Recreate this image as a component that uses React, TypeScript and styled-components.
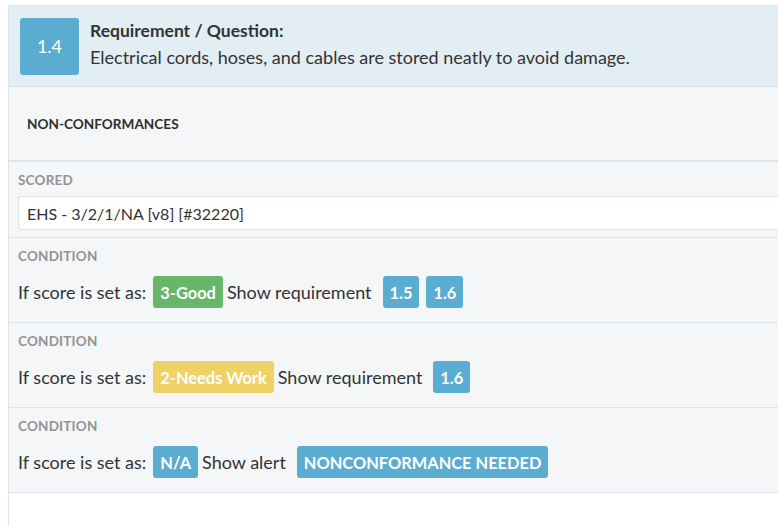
import styled, { createGlobalStyle } from "styled-components";

type Tone = "blue" | "green" | "yellow";

const TONES: Record<Tone, string> = {
  blue: "#5aadd1",
  green: "#67b66a",
  yellow: "#f0d166",
};

type Condition = {
  score: string;
  tone: Tone;
  action: string;
  targets: string[];
};

const CONDITIONS: Condition[] = [
  { score: "3-Good", tone: "green", action: "Show requirement", targets: ["1.5", "1.6"] },
  { score: "2-Needs Work", tone: "yellow", action: "Show requirement", targets: ["1.6"] },
  { score: "N/A", tone: "blue", action: "Show alert", targets: ["NONCONFORMANCE NEEDED"] },
];

const GlobalStyle = createGlobalStyle`
  html, body {
    margin: 0;
    background: #ffffff;
    overflow: hidden;
  }
  body {
    padding: 5px 0 0 8px;
    font-family: Lato, "Open Sans", sans-serif;
    color: #333333;
  }
`;

const App = function App() {
  return (
    <>
      <GlobalStyle />
      <Style.Panel>
        <Style.Header>
          <Style.Number>1.4</Style.Number>
          <Style.Question>
            <Style.QuestionTitle>Requirement / Question:</Style.QuestionTitle>
            <Style.QuestionText>
              Electrical cords, hoses, and cables are stored neatly to avoid damage.
            </Style.QuestionText>
          </Style.Question>
        </Style.Header>

        <Style.SectionTitle>Non-Conformances</Style.SectionTitle>

        <Style.Scored>
          <Style.Label>Scored</Style.Label>
          <Style.Field>EHS - 3/2/1/NA [v8] [#32220]</Style.Field>
        </Style.Scored>

        {CONDITIONS.map((condition) => (
          <Style.ConditionBlock key={condition.score}>
            <Style.Label>Condition</Style.Label>
            <Style.Rule>
              <span>If score is set as:</span>
              <Style.ScoreTag $tone={condition.tone}>{condition.score}</Style.ScoreTag>
              <Style.Action>{condition.action}</Style.Action>
              <Style.Targets>
                {condition.targets.map((target) => (
                  <Style.Tag key={target} $tone="blue">
                    {target}
                  </Style.Tag>
                ))}
              </Style.Targets>
            </Style.Rule>
          </Style.ConditionBlock>
        ))}

        <Style.Footer />
      </Style.Panel>
    </>
  );
};

export default App;

const Style = {
  Panel: styled.div`
    width: 820px;
    border: 1px solid #dde3ea;
    border-right: none;
    background: #ffffff;
  `,
  Header: styled.div`
    display: flex;
    align-items: center;
    gap: 11px;
    height: 81px;
    padding: 0 11px;
    background: #e2edf4;
    border-bottom: 1px solid #d6e0e8;
    box-sizing: border-box;
  `,
  Number: styled.div`
    display: flex;
    align-items: center;
    justify-content: center;
    width: 59px;
    height: 57px;
    border-radius: 3px;
    background: #5aadd1;
    color: #ffffff;
    font-size: 18px;
    font-weight: 400;
  `,
  Question: styled.div`
    display: flex;
    flex-direction: column;
    margin-bottom: 5px;
    line-height: 26px;
    color: #333333;
  `,
  QuestionTitle: styled.div`
    font-size: 17.5px;
    font-weight: 700;
  `,
  QuestionText: styled.div`
    font-size: 18px;
    font-weight: 400;
  `,
  SectionTitle: styled.div`
    display: flex;
    align-items: center;
    height: 73px;
    padding-left: 18px;
    background: #f5f6f8;
    border-bottom: 2px solid #dde3ea;
    font-size: 13.6px;
    font-weight: 700;
    text-transform: uppercase;
    color: #2e2e2e;
  `,
  Scored: styled.div`
    padding: 9px 0 7px 9px;
    background: #f5f6f8;
    border-bottom: 1px solid #dde3ea;
  `,
  Label: styled.div`
    height: 18px;
    line-height: 18px;
    font-size: 13.5px;
    font-weight: 700;
    text-transform: uppercase;
    color: #939393;
    letter-spacing: 0.2px;
  `,
  Field: styled.div`
    display: flex;
    align-items: center;
    height: 34px;
    margin-top: 7px;
    padding-left: 8px;
    background: #ffffff;
    border: 1px solid #dde3ea;
    border-right: none;
    border-radius: 3px 0 0 3px;
    box-sizing: border-box;
    font-size: 16px;
    color: #333333;
  `,
  ConditionBlock: styled.div`
    padding: 9px 0 14px 9px;
    background: #f5f6f8;
    border-bottom: 1px solid #dde3ea;
  `,
  Rule: styled.div`
    display: flex;
    align-items: center;
    margin-top: 11px;
    height: 32px;
    font-size: 18px;
    color: #333333;
  `,
  Tag: styled.span<{ $tone: Tone }>`
    display: inline-flex;
    align-items: center;
    height: 32px;
    padding: 0 7px;
    border-radius: 3px;
    background: ${(p) => TONES[p.$tone]};
    color: #ffffff;
    font-weight: 700;
    font-size: 16.4px;
    white-space: nowrap;
  `,
  ScoreTag: styled.span<{ $tone: Tone }>`
    display: inline-flex;
    align-items: center;
    height: 32px;
    margin-left: 7px;
    padding: 0 7px;
    border-radius: 3px;
    background: ${(p) => TONES[p.$tone]};
    color: #ffffff;
    font-weight: 700;
    font-size: 16.4px;
    white-space: nowrap;
  `,
  Action: styled.span`
    margin-left: 4px;
  `,
  Targets: styled.span`
    display: inline-flex;
    gap: 7px;
    margin-left: 11px;
  `,
  Footer: styled.div`
    height: 60px;
  `,
};
